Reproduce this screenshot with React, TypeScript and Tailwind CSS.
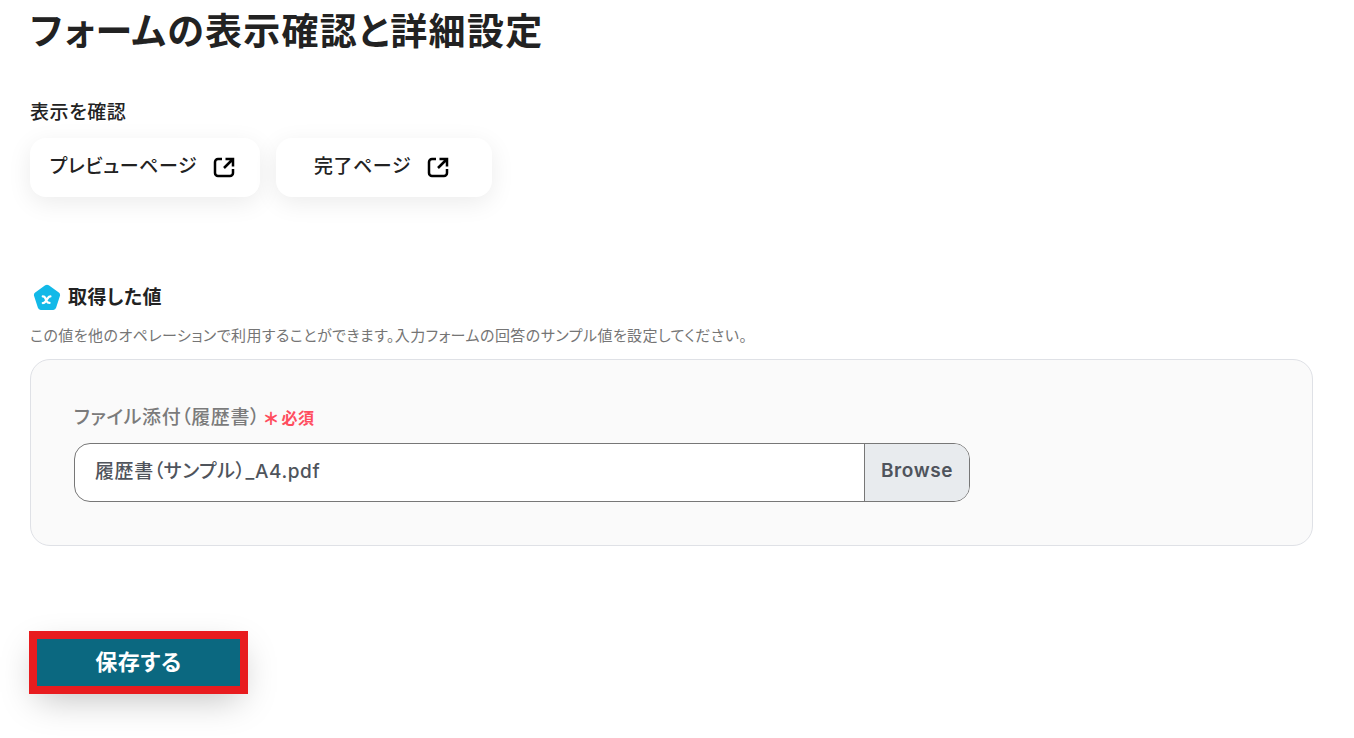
const font = "font-['Inter','Noto_Sans_CJK_JP',sans-serif]";

function OpenIcon() {
  return (
    <svg viewBox="0 0 22 22" className="mb-[2px] h-[22px] w-[22px]" fill="none" stroke="#000" strokeWidth="2.5">
      <path d="M9 3H5a3 3 0 0 0-3 3v11a3 3 0 0 0 3 3h12a3 3 0 0 0 3-3v-4" />
      <path d="M11 12l8-8M12.5 3H20v7.5" />
    </svg>
  );
}

function LinkButton({ label, width }: { label: string; width: string }) {
  return (
    <button
      type="button"
      className={`flex h-[59px] items-center justify-center gap-[16px] rounded-[16px] bg-white pr-[5px] text-[19px] font-medium tracking-[0.03em] text-[#222] shadow-[0_6px_24px_rgba(0,0,0,0.08)] ${width}`}
    >
      <span>{label}</span>
      <OpenIcon />
    </button>
  );
}

function VariableIcon() {
  return (
    <svg viewBox="0 0 28 28" className="h-[28px] w-[28px]">
      <path
        d="M12.2 1.3a3 3 0 0 1 3.6 0l10 7.3a3 3 0 0 1 1.1 3.4l-3.8 11.8a3 3 0 0 1-2.9 2.1H7.8a3 3 0 0 1-2.9-2.1L1.1 12a3 3 0 0 1 1.1-3.4z"
        fill="#12b9e8"
      />
      <path
        d="M9.8 12.4c1.4 0 2 .5 2.6 1.8l1.2 2.8c.6 1.3 1.2 1.9 2.9 1.9M17.4 12.4c-1 0-1.7.4-2.4 1.5l-2.8 4c-.6.9-1.2 1.2-2.4 1.2"
        fill="none"
        stroke="#fff"
        strokeWidth="2.3"
        strokeLinecap="round"
      />
    </svg>
  );
}

export default function App() {
  return (
    <div className={`h-[738px] overflow-hidden bg-white pr-[41px] pl-[30px] [font-feature-settings:'palt'] ${font}`}>
      <h1 className="pt-[9px] text-[37px] leading-[46px] font-bold tracking-[0.035em] text-[#222]">
        フォームの表示確認と詳細設定
      </h1>

      <h2 className="mt-[44px] text-[19px] leading-[28px] font-medium tracking-[0.03em] text-[#222]">表示を確認</h2>
      <div className="mt-[11px] flex gap-[16px]">
        <LinkButton label="プレビューページ" width="w-[230px]" />
        <LinkButton label="完了ページ" width="w-[216px]" />
      </div>

      <div className="mt-[87px] flex items-center gap-[7px] pl-[3px]">
        <VariableIcon />
        <h2 className="text-[19px] leading-[28px] font-bold tracking-[0.02em] text-[#222]">取得した値</h2>
      </div>
      <p className="mt-[14px] text-[15px] leading-[20px] tracking-[0.03em] text-[#757575]">
        この値を他のオペレーションで利用することができます。入力フォームの回答のサンプル値を設定してください。
      </p>

      <div className="mt-[13px] h-[187px] rounded-[20px] border border-[#dfe1e6] bg-[#fafafa] pt-[44px] pl-[43px]">
        <div className="flex items-center gap-[4px]">
          <span className="text-[19px] leading-[28px] font-medium tracking-[0.03em] text-[#7b7b7b]">ファイル添付（履歴書）</span>
          <span className="flex items-center gap-[3px] text-[16px] font-bold tracking-[0.03em] text-[#ff4d5e]">
            <span className="translate-y-[1px] text-[17px] leading-[28px] font-black">＊</span>
            必須
          </span>
        </div>
        <div className="mt-[11px] flex h-[59px] w-[896px] overflow-hidden rounded-[16px] border border-[#777] bg-white">
          <div className="flex flex-1 items-center pl-[20px] text-[19px] font-medium tracking-[0.03em] text-[#4f545c]">
            履歴書（サンプル）_A4.pdf
          </div>
          <div className="flex w-[105px] items-center justify-center border-l border-[#777] bg-[#e8ebee] pb-[2px] text-[19px] font-semibold tracking-[0.03em] text-[#4f545c]">
            Browse
          </div>
        </div>
      </div>

      <button
        type="button"
        className="mt-[93px] ml-[7px] flex h-[47px] w-[203px] items-center justify-center bg-[#0b6880] text-[22px] font-bold tracking-[0.03em] text-white shadow-[0_12px_36px_rgba(0,0,0,0.26)] outline-[8px] outline-[#e81c1f]"
      >
        保存する
      </button>
    </div>
  );
}
